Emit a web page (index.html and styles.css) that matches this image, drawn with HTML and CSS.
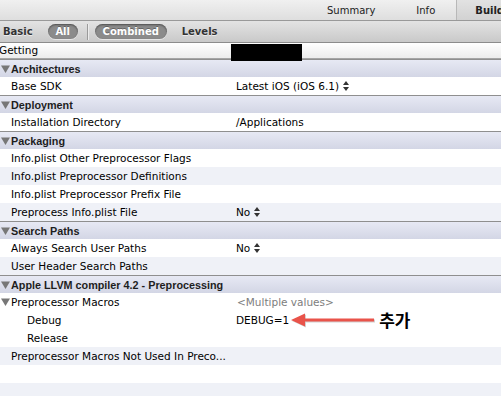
FILE: index.html
```html
<!DOCTYPE html>
<html lang="en">
<head>
  <meta charset="UTF-8" />
  <title>Build Settings</title>
  <meta name="viewport" content="width=device-width, initial-scale=1" />
  <link rel="stylesheet" href="styles.css">
</head>
<body>

  <div class="tabs">
    <span class="tab tab-summary">Summary</span>
    <span class="tab tab-info">Info</span>
    <span class="tab-sep"></span>
    <span class="tab tab-build">Build Settings</span>
  </div>

  <div class="filter">
    <span class="filter-item filter-basic">Basic</span>
    <span class="pill pill-all">All</span>
    <span class="filter-sep"></span>
    <span class="pill pill-combined">Combined</span>
    <span class="filter-item filter-levels">Levels</span>
  </div>

  <div class="colhead">
    <span class="colhead-label">Getting</span>
    <span class="redact"></span>
  </div>

  <div class="settings">
    <div class="group">
      <svg class="disclosure" width="9" height="8" viewBox="0 0 9 8"><path d="M0 0.5h9L4.5 8z" fill="#777"/></svg>
      Architectures
    </div>
    <div class="row">
      <span class="name">Base SDK</span>
      <span class="value">Latest iOS (iOS 6.1)
        <svg class="stepper" width="6" height="10" viewBox="0 0 6 10"><path d="M0 4L3 0L6 4z M0 6L3 10L6 6z" fill="#333"/></svg>
      </span>
    </div>

    <div class="group">
      <svg class="disclosure" width="9" height="8" viewBox="0 0 9 8"><path d="M0 0.5h9L4.5 8z" fill="#777"/></svg>
      Deployment
    </div>
    <div class="row">
      <span class="name">Installation Directory</span>
      <span class="value">/Applications</span>
    </div>

    <div class="group">
      <svg class="disclosure" width="9" height="8" viewBox="0 0 9 8"><path d="M0 0.5h9L4.5 8z" fill="#777"/></svg>
      Packaging
    </div>
    <div class="row">
      <span class="name">Info.plist Other Preprocessor Flags</span>
      <span class="value"></span>
    </div>
    <div class="row alt">
      <span class="name">Info.plist Preprocessor Definitions</span>
      <span class="value"></span>
    </div>
    <div class="row">
      <span class="name">Info.plist Preprocessor Prefix File</span>
      <span class="value"></span>
    </div>
    <div class="row alt">
      <span class="name">Preprocess Info.plist File</span>
      <span class="value">No
        <svg class="stepper" width="6" height="10" viewBox="0 0 6 10"><path d="M0 4L3 0L6 4z M0 6L3 10L6 6z" fill="#333"/></svg>
      </span>
    </div>

    <div class="group">
      <svg class="disclosure" width="9" height="8" viewBox="0 0 9 8"><path d="M0 0.5h9L4.5 8z" fill="#777"/></svg>
      Search Paths
    </div>
    <div class="row">
      <span class="name">Always Search User Paths</span>
      <span class="value">No
        <svg class="stepper" width="6" height="10" viewBox="0 0 6 10"><path d="M0 4L3 0L6 4z M0 6L3 10L6 6z" fill="#333"/></svg>
      </span>
    </div>
    <div class="row alt">
      <span class="name">User Header Search Paths</span>
      <span class="value"></span>
    </div>

    <div class="group">
      <svg class="disclosure" width="9" height="8" viewBox="0 0 9 8"><path d="M0 0.5h9L4.5 8z" fill="#777"/></svg>
      Apple LLVM compiler 4.2 - Preprocessing
    </div>
    <div class="row">
      <span class="name name-open">
        <svg class="disclosure" width="9" height="8" viewBox="0 0 9 8"><path d="M0 0.5h9L4.5 8z" fill="#777"/></svg>
        Preprocessor Macros
      </span>
      <span class="value muted">&lt;Multiple values&gt;</span>
    </div>
    <div class="row">
      <span class="name sub">Debug</span>
      <span class="value">DEBUG=1
        <svg class="arrow" width="86" height="16" viewBox="0 0 86 16">
          <path d="M1 8L15 1.5V6.5H84V9.5H15V14.5z" fill="#000" opacity="0.18" transform="translate(1 1)"/>
          <path d="M1 8L15 1.5V6.5H84V9.5H15V14.5z" fill="#e9534a"/>
        </svg>
        <span class="note">추가</span>
      </span>
    </div>
    <div class="row">
      <span class="name sub">Release</span>
      <span class="value"></span>
    </div>
    <div class="row alt">
      <span class="name">Preprocessor Macros Not Used In Preco...</span>
      <span class="value"></span>
    </div>
    <div class="row">
      <span class="name"></span>
      <span class="value"></span>
    </div>
    <div class="row alt">
      <span class="name"></span>
      <span class="value"></span>
    </div>
  </div>

</body>
</html>
```

FILE: styles.css
```css
:root {
  --line: #8f8f8f;
  --group-top: #e7e9f4;
  --group-bottom: #d3d6e5;
  --alt-row: #eff1f7;
}
body {
  margin: 0;
  width: 501px;
  height: 396px;
  overflow: hidden;
  background: white;
  font-family: 'DejaVu Sans', sans-serif;
  font-size: 10.5px;
  color: #000;
}

/* top tab strip */
.tabs {
  display: flex;
  align-items: center;
  height: 20px;
  border-bottom: 1px solid #999;
  background: linear-gradient(#f0f0f0, #dedede);
  color: #222;
  font-size: 10px;
  white-space: nowrap;
}
.tab-summary {
  margin-left: 327px;
}
.tab-info {
  margin-left: 41px;
}
.tab-sep {
  align-self: stretch;
  width: 1px;
  margin-left: 21px;
  background: #b8b8b8;
  box-shadow: 1px 0 0 #f6f6f6;
}
.tab-build {
  align-self: stretch;
  display: flex;
  align-items: center;
  flex: 1;
  padding-left: 18px;
  background: linear-gradient(#e2e2e2, #d2d2d2);
  font-weight: bold;
  overflow: hidden;
}

/* filter bar */
.filter {
  display: flex;
  align-items: center;
  height: 21px;
  border-bottom: 1px solid #8c8c8c;
  background: linear-gradient(#e3e3e3, #c9c9c9);
  font-size: 10px;
  font-weight: bold;
  color: #333;
  white-space: nowrap;
}
.filter-item {
  text-shadow: 0 1px 0 rgba(255,255,255,0.6);
}
.filter-basic {
  margin-left: 3px;
}
.pill {
  height: 15px;
  line-height: 15px;
  border-radius: 8px;
  background: #8b8b8b;
  box-shadow: inset 0 1px 2px rgba(0,0,0,0.45), 0 1px 0 rgba(255,255,255,0.5);
  color: white;
  text-align: center;
  text-shadow: 0 -1px 0 rgba(0,0,0,0.3);
}
.pill-all {
  width: 30px;
  margin-left: 15px;
}
.filter-sep {
  width: 1px;
  height: 16px;
  margin-left: 9px;
  background: #9a9a9a;
  box-shadow: 1px 0 0 #ececec;
}
.pill-combined {
  width: 72px;
  margin-left: 7px;
}
.filter-levels {
  margin-left: 15px;
}

/* column header */
.colhead {
  position: relative;
  height: 15px;
  line-height: 15px;
  border-bottom: 1px solid #a5a5a5;
  background: linear-gradient(#ffffff, #ececec);
}
.colhead-label {
  margin-left: -1px;
}
.redact {
  position: absolute;
  left: 231px;
  top: 1px;
  width: 71px;
  height: 17px;
  background: #000;
  z-index: 2;
}

/* settings list */
.group {
  display: flex;
  align-items: center;
  gap: 1px;
  height: 17px;
  border-top: 1px solid var(--line);
  background: linear-gradient(var(--group-top), var(--group-bottom));
  font-family: 'Liberation Sans', sans-serif;
  font-size: 10.8px;
  font-weight: bold;
  color: #1e1e1e;
  padding-left: 1px;
  white-space: nowrap;
}
.row {
  display: grid;
  grid-template-columns: 236px 1fr;
  align-items: center;
  height: 18px;
  white-space: nowrap;
}
.row.alt {
  background: var(--alt-row);
}
.name {
  padding-left: 11px;
  overflow: hidden;
}
.name-open {
  display: flex;
  align-items: center;
  gap: 1px;
  padding-left: 1px;
}
.name.sub {
  padding-left: 27px;
}
.value {
  display: flex;
  align-items: center;
  gap: 4px;
}
.muted {
  color: #7d7d7d;
  padding-left: 1px;
}
.stepper {
  flex: none;
}
.arrow {
  flex: none;
  margin-left: -3px;
}
.note {
  margin-left: -1px;
  font-family: 'Noto Sans CJK KR', sans-serif;
  font-size: 17px;
  font-weight: bold;
  line-height: 18px;
}
```
